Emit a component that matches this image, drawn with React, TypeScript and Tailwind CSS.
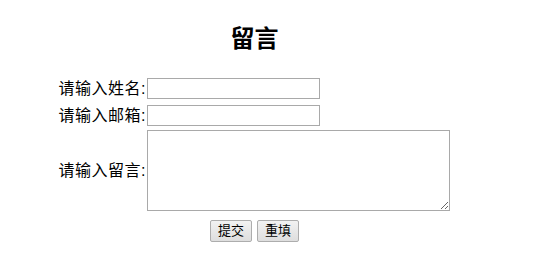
import React from "react";

const font = "font-['Liberation_Sans','Noto_Sans_CJK_SC',sans-serif]";

const App = () => {
  return (
    <div className={`w-[509px] h-[260px] bg-white text-black ${font}`}>
      {/* Title */}
      <h2 className="pt-[25px] text-center text-[24px] leading-[28px] font-bold">留言</h2>

      {/* Form */}
      <form className="ml-[58px] mt-[25px] flex flex-col w-[392px]" onSubmit={(e) => e.preventDefault()}>
        <div className="flex items-center h-[21px]">
          <label className="shrink-0 w-[88px] whitespace-nowrap text-right text-[16px] leading-[21px] tracking-[0.5px]">请输入姓名:</label>
          <input type="text" className="ml-[1px] w-[173px] h-[21px] border border-[#a9a9a9] px-[2px] text-[13px] outline-none" />
        </div>
        <div className="mt-[6px] flex items-center h-[21px]">
          <label className="shrink-0 w-[88px] whitespace-nowrap text-right text-[16px] leading-[21px] tracking-[0.5px]">请输入邮箱:</label>
          <input type="text" className="ml-[1px] w-[173px] h-[21px] border border-[#a9a9a9] px-[2px] text-[13px] outline-none" />
        </div>
        <div className="mt-[4px] flex items-center h-[81px]">
          <label className="shrink-0 w-[88px] whitespace-nowrap text-right text-[16px] leading-[21px] tracking-[0.5px]">请输入留言:</label>
          <textarea className="ml-[1px] w-[303px] h-[81px] border border-[#a9a9a9] p-[2px] text-[13px] outline-none" />
        </div>

        {/* Buttons */}
        <div className="mt-[9px] flex gap-[5px] pl-[152px]">
          <button type="submit" className="w-[42px] h-[22px] border border-[#adadad] rounded-[2px] bg-gradient-to-b from-[#f2f2f2] to-[#dedede] text-[13px] leading-[20px]">
            提交
          </button>
          <button type="reset" className="w-[42px] h-[22px] border border-[#adadad] rounded-[2px] bg-gradient-to-b from-[#f2f2f2] to-[#dedede] text-[13px] leading-[20px]">
            重填
          </button>
        </div>
      </form>
    </div>
  );
};

export default App;
